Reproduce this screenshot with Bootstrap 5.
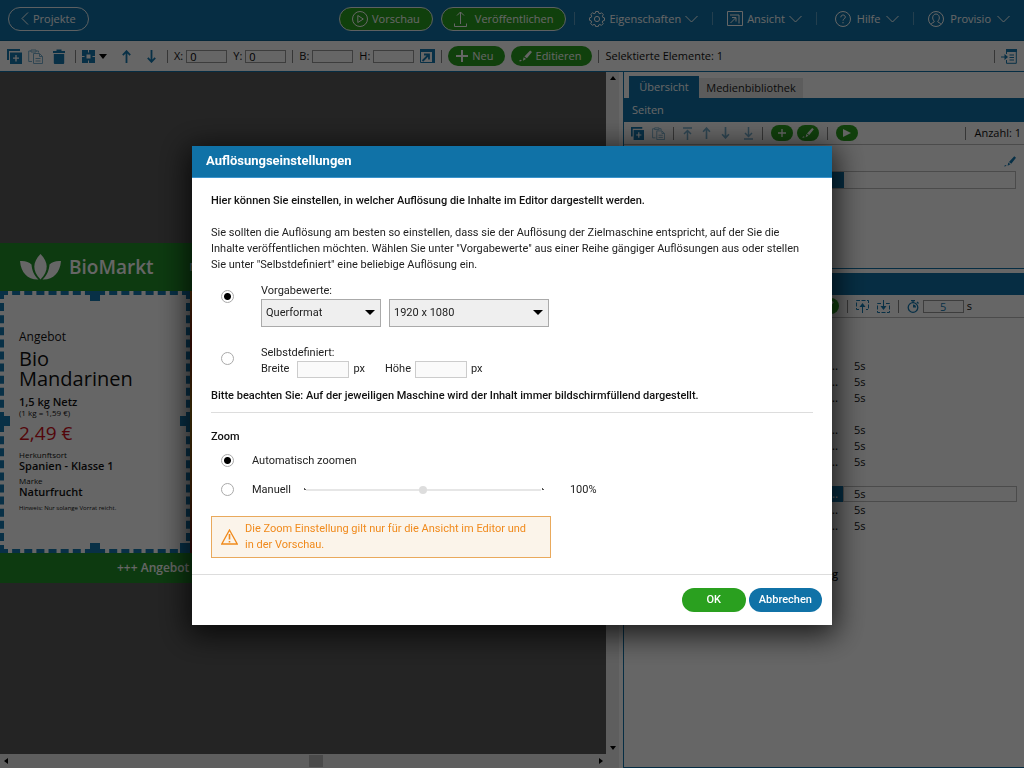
<!DOCTYPE html>
<html lang="de">
<head>
<meta charset="utf-8">
<meta name="viewport" content="width=device-width, initial-scale=1">
<title>Auflösungseinstellungen</title>
<link href="https://cdn.jsdelivr.net/npm/bootstrap@5.3.0/dist/css/bootstrap.min.css" rel="stylesheet">
<style>
:root{--blue:#1072a7;--green:#2aa01f}
body{font:11px/16px "Open Sans",sans-serif;color:#111;background:#fff}
button,input,select{font:inherit}
svg{display:block;flex:none}
.app-shell{height:100vh;overflow:hidden}
.top-bar{height:41px;background:var(--blue);padding:0 14px 3px 8px;border-bottom:1px solid #0b6391}
.top-bar .btn{--bs-btn-padding-y:0;--bs-btn-color:#fff;--bs-btn-hover-color:#fff;--bs-btn-font-size:11px;color:#fff;line-height:16px;white-space:nowrap}
.pill-btn{height:24px;border:1px solid #e8f0f4!important;border-radius:12px!important;display:flex;align-items:center}
.pill-btn.go{background:var(--green)}
.menu-btn{border:0;display:flex;align-items:center;gap:4px;--bs-btn-padding-x:0}
.menu-btn.wide{gap:6px}
.sep{width:1px;height:13px;background:#888;flex:none}
.top-bar .sep{background:#5b9fc2;margin:0 14px}
.top-bar .sep.near{margin-left:8px}
.tool-bar{height:31px;padding:0 7px;border-bottom:1px solid var(--blue);gap:6px}
.icon-btn{border:0;background:none;padding:0;color:#1478b0;display:flex;align-items:center;justify-content:center}
.icon-btn.arrow{width:19px}
.icon-btn.pale{color:#78b0cf}
.field{display:flex;align-items:center;gap:3px;white-space:nowrap}
.field input{width:41px;height:13px;padding:0 3px;border:1px solid #999;background:#fff;line-height:12px;border-radius:0}
.act-btn{height:20px;border:0;border-radius:10px;background:var(--green);color:#fff;display:flex;align-items:center;justify-content:center;gap:4px;padding:0 11px 0 8px}
.work-area{min-width:0;min-height:0}
.canvas-col{min-width:0}
.canvas-bg{background:#5a5a5a;min-height:0;overflow:hidden}
.v-scroll{width:13px;background:#ececec}
.h-scroll{height:14px;background:#ececec}
.brand-band{height:48px;background:#219129;color:#fff;padding-left:20px}
.brand-name{font-size:19px;line-height:24px;font-weight:600}
.brand-nav{margin-left:36px;font-weight:600}
.ticker{height:30px;background:#219129;color:#fff;font-size:12px;font-weight:600;padding-left:117px;white-space:nowrap}
.offer-row{height:262px;background:linear-gradient(#d4761a,#b42a12 20%,#d49a1a 45%,#c06a15 75%,#8a1a1a)}
.offer{position:relative;width:190px;background:#fff;padding:34px 15px 0;
 outline:4px dashed #1478b0;outline-offset:-4px;border:4px solid #fff}
.grip{position:absolute;width:10px;height:10px;background:#1478b0}
.offer .kicker{font-size:12px;font-weight:500}
.offer h2{font-size:20px;line-height:20px;font-weight:500;margin:4px 0 6px}
.offer .line{font-size:11px;line-height:13px;font-weight:600}
.offer .price{font-size:19px;line-height:22px;color:#d01020;font-weight:500;margin:5px 0 6px}
.offer .tiny{font-size:8px;line-height:9px;font-weight:500}
.offer .note{font-size:6px;line-height:8px;margin-top:6px}
.side{width:401px;margin-left:4px;border-left:1px solid var(--blue);border-bottom:1px solid var(--blue);min-height:0}
.side-tabs{height:26px;padding-left:5px}
.side-tabs button{border:0;border-radius:0;padding:0;line-height:16px}
.tab-on{width:70px;height:22px;background:var(--blue);color:#fff}
.tab-off{width:104px;height:20px;background:#e6e6e6;color:#222}
.bar-title{height:24px;background:var(--blue);color:#fff;padding:0 8px;display:flex;align-items:center}
.bar-title.short{height:22px}
.mini-bar{height:23px;border-bottom:1px solid #bbb;padding:0 3px 0 7px}
.mini-go{width:22px;height:16px;border:0;border-radius:8px;background:var(--green);padding:0;display:flex;align-items:center;justify-content:center}
.name-row{height:26px}
.page-list{height:124px;border-bottom:1px solid var(--blue)}
.page-row{height:18px;margin-right:8px;border:1px solid #bbb}
.page-row div{width:219px;background:var(--blue)}
.tree{border-collapse:collapse;width:393px;margin-top:40px}
.tree td{height:16px;padding:0;line-height:14px;border:0}
.tree td:first-child{width:219px;text-align:right;padding-right:5px;font-weight:600}
.tree td:last-child{padding-left:11px}
.tree .picked td:first-child{background:var(--blue);color:#fff}
.tree .picked td:last-child{box-shadow:inset 0 0 0 1px #bbb}
/* dialog */
.modal-backdrop{--bs-backdrop-opacity:.6}
.modal{padding-top:1px;overflow:hidden}
.modal-dialog{max-width:640px}
.modal-content{border:0;border-radius:0;font:11px/16px Roboto,sans-serif;color:#222;box-shadow:0 6px 28px 4px rgba(0,0,0,.75)}
.modal-header{height:32px;background:#1072a7;border-bottom:1px solid #3c94cc;border-radius:0;padding:0 14px}
.modal-title{font-size:13px;line-height:16px;font-weight:700;color:#fff}
.modal-body{padding:15px 19px 16px}
.modal-body p{margin:0}
.strong-line{font-weight:500;color:#111}
.gap-s{margin-top:10px!important}
.gap-m{margin-top:13px}
.gap-l{margin-top:18px}
.opt{display:grid;grid-template-columns:50px 1fr}
.opt.slim{grid-template-columns:41px 1fr}
.dot{appearance:none;width:13px;height:13px;border:1px solid #aaa;border-radius:50%;margin:7px 0 0 10px;background:#fff}
.slim .dot{margin-top:0}
.dot:checked{background:radial-gradient(circle,#000 3px,#fff 4px)}
.pick{height:28px;border:1px solid #aaa;border-radius:0;background:#efefef url("data:image/svg+xml,%3Csvg xmlns='http://www.w3.org/2000/svg' width='10' height='5'%3E%3Cpath d='M0 0h10L5 5z'/%3E%3C/svg%3E") no-repeat right 5px center;appearance:none;padding:0 4px;color:#222}
.pick.narrow{width:120px}
.pick.broad{width:160px}
.size-box{width:52px;height:17px;border:1px solid #ccc;background:#fafafa;padding:0 3px}
.rule{height:1px;background:#ddd}
.zoom-range{appearance:none;width:241px;height:9px;margin:0 26px 0 12px;background:
 radial-gradient(circle,#555 1px,transparent 1px) left center/3px 3px no-repeat,
 radial-gradient(circle,#555 1px,transparent 1px) right center/3px 3px no-repeat,
 linear-gradient(#e6e6e6,#e6e6e6) center/235px 2px no-repeat}
.zoom-range::-webkit-slider-thumb{appearance:none;width:8px;height:8px;border-radius:50%;background:#ddd}
.hint{width:340px;border:1px solid #e9a95c;background:#fbf4ea;color:#f08a1c;padding:4px 16px 4px 9px;gap:7px}
.modal-footer{padding:13px 10px;border-top:1px solid #ddd;gap:3px}
.modal-footer .btn{margin:0;height:24px;border:0;border-radius:12px;padding:0 10px;font-size:11px;line-height:24px;font-weight:500;color:#fff}
.modal-footer .ok{background:#2aa01f;min-width:64px}
.modal-footer .cancel{background:#1072a7}
</style>
</head>
<body>
<svg width="0" height="0" class="position-absolute" aria-hidden="true">
 <symbol id="chev" viewBox="0 0 13 8"><path d="M.5 1l6 6 6-6" fill="none" stroke="currentColor"/></symbol>
 <symbol id="dup" viewBox="0 0 15 15"><path d="M1 11V1h12" fill="none" stroke="currentColor" stroke-width="2"/><path d="M3 3.500h12V15H3z" fill="currentColor"/><path d="M9 6v6.500M6 9.200h6" stroke="#fff" stroke-width="1.300"/></symbol>
 <symbol id="paste" viewBox="0 0 15 15"><path d="M4 12.500H.7V2H3M8 2h2.500v1.500M3 1h5v2H3z" fill="none" stroke="currentColor"/><path d="M5.500 4.500h6l3 3v7h-9zM11.500 4.500v3h3M7.500 9.500h5M7.500 12h5" fill="none" stroke="currentColor"/></symbol>
 <symbol id="up" viewBox="0 0 9 13"><path d="M4.500 13V1.500M.8 5.200l3.700-4 3.700 4" fill="none" stroke="currentColor" stroke-width="1.800"/></symbol>
 <symbol id="down" viewBox="0 0 9 13"><path d="M4.500 0v11.500M.8 7.800l3.700 4 3.700-4" fill="none" stroke="currentColor" stroke-width="1.800"/></symbol>
 <symbol id="pen" viewBox="0 0 14 12"><path d="M12 0l2 1.600-5.500 6.900-2.700-2zM5 7.300l2.600 2-3.400 1.700zM0 11.200l2-1.200 1 1-2 .8z" fill="currentColor"/></symbol>
 <symbol id="plus" viewBox="0 0 12 12"><path d="M6 0v12M0 6h12" stroke="currentColor" stroke-width="2"/></symbol>
</svg>

<div class="app-shell d-flex flex-column">
 <header class="top-bar d-flex align-items-center">
  <button class="btn pill-btn px-2" type="button"><svg class="ms-1" width="8" height="13" viewBox="0 0 8 13"><path d="M7 .5l-6 6 6 6" fill="none" stroke="#fff"/></svg><span class="ms-1 me-1">Projekte</span></button>
  <button class="btn pill-btn go ms-auto px-2" type="button"><svg class="ms-1 me-1" width="16" height="16" viewBox="0 0 16 16" fill="none" stroke="#fff"><circle cx="8" cy="8" r="7.500"/><path d="M5.800 4.500v7l5.500-3.500z"/></svg><span class="me-1">Vorschau</span></button>
  <button class="btn pill-btn go ms-2 px-2" type="button"><svg class="ms-1 me-2" width="13" height="16" viewBox="0 0 13 16" fill="none" stroke="#fff"><path d="M6.500 13V1M3 4.500L6.500 1 10 4.500M.5 12.500v3h12v-3"/></svg><span class="me-1">Veröffentlichen</span></button>
  <span class="sep near"></span>
  <button class="btn menu-btn" type="button"><svg width="16" height="16" viewBox="0 0 16 16" fill="none" stroke="#fff"><path d="M6.700 .5h2.600l.5 1.700 1.200.5 1.600-.9 1.700 1.800-.9 1.600.5 1.200 1.600.5v2.500l-1.700.5-.5 1.200.9 1.500-1.800 1.800-1.500-.9-1.200.5-.5 1.600H6.700l-.5-1.700-1.200-.5-1.600.9-1.700-1.800.9-1.500-.5-1.200-1.600-.5V6.800l1.700-.5.500-1.200-.9-1.600 1.800-1.700 1.500.9 1.200-.5z"/><circle cx="8" cy="8" r="2.600"/></svg>Eigenschaften<svg width="13" height="8"><use href="#chev"/></svg></button>
  <span class="sep"></span>
  <button class="btn menu-btn" type="button"><svg width="16" height="15" viewBox="0 0 16 15" fill="none" stroke="#fff"><path d="M.5 .5h15v14H.5zM3 4h9v8.500M3.500 12l5-5M5 6.500h4v4"/></svg>Ansicht<svg width="13" height="8"><use href="#chev"/></svg></button>
  <span class="sep"></span>
  <button class="btn menu-btn wide ms-1" type="button"><svg width="16" height="16" viewBox="0 0 16 16" fill="none" stroke="#fff"><circle cx="8" cy="8" r="7.500"/><path d="M5.800 6.300c0-3 4.500-3 4.500-.2C10.300 8 8 7.700 8 9.700M8 11v1.300"/></svg>Hilfe<svg width="13" height="8"><use href="#chev"/></svg></button>
  <span class="sep"></span>
  <button class="btn menu-btn wide" type="button"><svg width="16" height="16" viewBox="0 0 16 16" fill="none" stroke="#fff"><circle cx="8" cy="8" r="7.500"/><path d="M3 13.500c.3-2 3.500-1.700 3.300-3.300C3.500 8 4.500 3 8 3s4.500 5 1.700 7.200c-.2 1.600 3 1.300 3.300 3.300"/></svg>Provisio<svg width="13" height="8"><use href="#chev"/></svg></button>
 </header>

 <div class="tool-bar d-flex align-items-center">
  <button class="icon-btn" type="button" aria-label="Duplizieren"><svg width="15" height="15"><use href="#dup"/></svg></button>
  <button class="icon-btn pale" type="button" aria-label="Einfügen"><svg width="15" height="15"><use href="#paste"/></svg></button>
  <button class="icon-btn px-1" type="button" aria-label="Löschen"><svg width="12" height="15" viewBox="0 0 12 15" fill="currentColor"><path d="M0 2h3.500V.5h5V2H12v2H0zM.8 5h10.400v9q0 1-1 1H1.800q-1 0-1-1z"/></svg></button>
  <span class="sep"></span>
  <button class="icon-btn" type="button" aria-label="Ausrichten"><svg width="13" height="13" viewBox="0 0 13 13"><path d="M0 0h13v13H0z" fill="currentColor"/><path d="M4.500 4.500h4v4h-4zM6 0h1v2.500H6zM6 10.500h1V13H6zM0 6h2.500v1H0zM10.500 6H13v1h-2.500z" fill="#fff"/></svg><svg class="ms-1" width="8" height="5"><path d="M0 0h8L4 5z"/></svg></button>
  <button class="icon-btn arrow ms-1" type="button" aria-label="Nach oben"><svg width="9" height="13"><use href="#up"/></svg></button>
  <button class="icon-btn arrow" type="button" aria-label="Nach unten"><svg width="9" height="13"><use href="#down"/></svg></button>
  <span class="sep"></span>
  <label class="field">X: <input value="0"></label>
  <label class="field">Y: <input value="0"></label>
  <span class="sep"></span>
  <label class="field">B: <input></label>
  <label class="field">H: <input></label>
  <button class="icon-btn" type="button" aria-label="Größe anpassen"><svg width="15" height="14" viewBox="0 0 15 14" fill="none" stroke="currentColor"><path d="M0 1.500h15M13.500 0v14" stroke-width="3"/><path d="M.5 2v11.500H13"/><path d="M2.500 12l6-6M4 5.500h5v5" stroke-width="1.800"/></svg></button>
  <span class="sep"></span>
  <button class="act-btn" type="button"><svg width="12" height="12"><use href="#plus"/></svg>Neu</button>
  <button class="act-btn" type="button"><svg width="13" height="12"><use href="#pen"/></svg>Editieren</button>
  <span class="sep"></span>
  <span class="text-nowrap">Selektierte Elemente: 1</span>
  <span class="sep ms-auto"></span>
  <button class="icon-btn" type="button" aria-label="Seitenleiste einklappen"><svg width="16" height="15" viewBox="0 0 16 15" fill="none" stroke="currentColor"><path d="M5.500 5V1.500h9.800v12.800H5.500V11"/><path d="M5 1.500h11" stroke-width="3"/><path d="M8.500 6h4.500M8.500 8.500h4.500M8.500 11h4.500M0 8h5"/><path d="M3.500 5L7 8l-3.500 3z" fill="currentColor" stroke="none"/></svg></button>
 </div>

 <div class="work-area d-flex flex-fill">
  <div class="canvas-col d-flex flex-column flex-fill">
   <div class="d-flex flex-fill work-area">
    <main class="canvas-bg flex-fill d-flex flex-column justify-content-center">
     <div class="brand-band d-flex align-items-center">
      <svg width="41" height="26" viewBox="0 0 41 26" fill="#fff"><path d="M20.500 0c8 8 8.500 17 0 25.500C12 17 12.500 8 20.500 0z"/><path d="M0 7c5-.5 9 1 11.500 3.500.5 6 2.500 11 7 15C8 26 1 19 0 7zM41 7c-5-.5-9 1-11.500 3.500-.5 6-2.500 11-7 15C33 26 40 19 41 7z"/></svg>
      <span class="brand-name ms-2">BioMarkt</span><span class="brand-nav">Neu</span>
     </div>
     <div class="offer-row d-flex">
      <section class="offer">
       <i class="grip" style="left:86px;top:-4px"></i><i class="grip" style="left:-4px;top:121px"></i><i class="grip" style="right:-4px;top:121px"></i><i class="grip" style="left:86px;bottom:-4px"></i><i class="grip" style="right:-4px;bottom:-4px"></i>
       <div class="kicker">Angebot</div>
       <h2>Bio<br>Mandarinen</h2>
       <div class="line">1,5 kg Netz</div>
       <div class="tiny">(1 kg = 1,59 €)</div>
       <div class="price">2,49 €</div>
       <div class="tiny">Herkunftsort</div>
       <div class="line mb-1">Spanien - Klasse 1</div>
       <div class="tiny">Marke</div>
       <div class="line">Naturfrucht</div>
       <div class="note">Hinweis: Nur solange Vorrat reicht.</div>
      </section>
     </div>
     <div class="ticker d-flex align-items-center">+++ Angebot +++</div>
    </main>
    <div class="v-scroll d-flex flex-column justify-content-between align-items-center py-1"><svg width="6" height="4"><path d="M0 4l3-4 3 4z"/></svg><svg width="6" height="4"><path d="M0 0l3 4 3-4z"/></svg></div>
   </div>
   <div class="h-scroll d-flex align-items-center justify-content-between ps-1">
    <svg width="4" height="6"><path d="M4 0L0 3l4 3z"/></svg>
    <svg class="ms-4" width="14" height="12"><path d="M0 0h14v12H0z" fill="#b8b8b8"/></svg>
    <svg class="me-3" width="4" height="6"><path d="M0 0l4 3-4 3z"/></svg>
   </div>
  </div>

  <aside class="side flex-shrink-0">
   <div class="side-tabs d-flex align-items-end"><button class="tab-on" type="button">Übersicht</button><button class="tab-off" type="button">Medienbibliothek</button></div>
   <div class="bar-title">Seiten</div>
   <div class="mini-bar d-flex align-items-center">
    <button class="icon-btn" type="button" aria-label="Seite duplizieren"><svg width="13" height="13"><use href="#dup"/></svg></button>
    <button class="icon-btn pale ms-2" type="button" aria-label="Seite einfügen"><svg width="13" height="13"><use href="#paste"/></svg></button>
    <span class="sep ms-2"></span>
    <button class="icon-btn pale ms-2" type="button" aria-label="An den Anfang"><svg width="11" height="13" viewBox="0 0 11 13"><path d="M1 1h9M5.500 13V3.500M2 7l3.500-3.500L9 7" fill="none" stroke="currentColor" stroke-width="1.500"/></svg></button>
    <button class="icon-btn pale arrow ms-1" type="button" aria-label="Seite nach oben"><svg width="9" height="12"><use href="#up"/></svg></button>
    <button class="icon-btn pale arrow" type="button" aria-label="Seite nach unten"><svg width="9" height="12"><use href="#down"/></svg></button>
    <button class="icon-btn pale arrow ms-1" type="button" aria-label="Ans Ende"><svg width="11" height="13" viewBox="0 0 11 13"><path d="M1 12h9M5.500 0v9.500M2 6l3.500 3.500L9 6" fill="none" stroke="currentColor" stroke-width="1.500"/></svg></button>
    <span class="sep ms-1"></span>
    <button class="mini-go text-white ms-2" type="button" aria-label="Neue Seite"><svg width="8" height="8"><use href="#plus"/></svg></button>
    <button class="mini-go text-white ms-1" type="button" aria-label="Seite bearbeiten"><svg width="12" height="10"><use href="#pen"/></svg></button>
    <span class="sep ms-2"></span>
    <button class="mini-go ms-2" type="button" aria-label="Abspielen"><svg width="8" height="8"><path d="M0 0l8 4-8 4z" fill="#fff"/></svg></button>
    <span class="sep ms-auto me-2"></span><span>Anzahl: 1</span>
   </div>
   <div class="page-list d-flex flex-column">
    <div class="name-row d-flex justify-content-end align-items-end pb-1 pe-2"><button class="icon-btn" type="button" aria-label="Name bearbeiten"><svg width="12" height="11"><use href="#pen"/></svg></button></div>
    <div class="page-row d-flex"><div></div></div>
   </div>
   <div class="bar-title short mt-1"></div>
   <div class="mini-bar d-flex align-items-center justify-content-end pe-5">
    <button class="mini-go text-white" type="button" aria-label="Medium bearbeiten"><svg width="12" height="10"><use href="#pen"/></svg></button>
    <span class="sep ms-2 me-2"></span>
    <button class="icon-btn" type="button" aria-label="Exportieren"><svg width="13" height="13" viewBox="0 0 13 13" fill="none" stroke="currentColor"><path d="M3 9.500H.5v-9h12v9H10" stroke-dasharray="4 1.500"/><path d="M6.500 13V5"/><path d="M3.500 7l3-4 3 4z" fill="currentColor" stroke="none"/></svg></button>
    <button class="icon-btn ms-2" type="button" aria-label="Importieren"><svg width="13" height="13" viewBox="0 0 13 13" fill="none" stroke="currentColor"><path d="M4 3.500H.5v9h12v-9H9" stroke-dasharray="4 1.500"/><path d="M6.500 0v8"/><path d="M3.500 6l3 4 3-4z" fill="currentColor" stroke="none"/></svg></button>
    <span class="sep ms-2 me-2"></span>
    <svg width="12" height="13" viewBox="0 0 12 13" fill="none" stroke="#1478b0" stroke-width="1.300"><circle cx="6" cy="7.500" r="4.800"/><path d="M4 .7h4M6 1v2M10 2l1.500 1.500"/><path d="M6 4.500v3h3A3 3 0 0 0 6 4.500z" fill="#1478b0" stroke="none"/></svg>
    <label class="field ms-1 me-1"><input class="text-center" style="color:#1478b0" value="5">s</label>
   </div>
   <table class="tree">
    <tr><td>...</td><td>5s</td></tr><tr><td>...</td><td>5s</td></tr><tr><td>...</td><td>5s</td></tr>
    <tr><td></td><td></td></tr>
    <tr><td>...</td><td>5s</td></tr><tr><td>...</td><td>5s</td></tr><tr><td>...</td><td>5s</td></tr>
    <tr><td></td><td></td></tr>
    <tr class="picked"><td>...</td><td>5s</td></tr><tr><td>...</td><td>5s</td></tr><tr><td>...</td><td>5s</td></tr>
    <tr><td></td><td></td></tr><tr><td></td><td></td></tr>
    <tr><td>g</td><td></td></tr>
   </table>
  </aside>
 </div>
</div>

<div class="modal-backdrop show"></div>
<div class="modal d-block" role="dialog" aria-modal="true" aria-labelledby="dlgTitle">
 <div class="modal-dialog modal-dialog-centered my-0 min-vh-100">
  <form class="modal-content">
   <div class="modal-header"><h1 class="modal-title" id="dlgTitle">Auflösungseinstellungen</h1></div>
   <div class="modal-body">
    <p class="strong-line mb-3">Hier können Sie einstellen, in welcher Auflösung die Inhalte im Editor dargestellt werden.</p>
    <p class="pe-2">Sie sollten die Auflösung am besten so einstellen, dass sie der Auflösung der Zielmaschine entspricht, auf der Sie die Inhalte veröffentlichen möchten. Wählen Sie unter "Vorgabewerte" aus einer Reihe gängiger Auflösungen aus oder stellen Sie unter "Selbstdefiniert" eine beliebige Auflösung ein.</p>
    <div class="opt gap-s">
     <input class="dot" type="radio" name="res" id="preset" checked>
     <div><label class="d-block" for="preset">Vorgabewerte:</label>
      <div class="d-flex gap-2"><select class="pick narrow" aria-label="Format"><option>Querformat</option></select><select class="pick broad" aria-label="Auflösung"><option>1920 x 1080</option></select></div></div>
    </div>
    <div class="opt gap-l">
     <input class="dot" type="radio" name="res" id="custom">
     <div><label class="d-block" for="custom">Selbstdefiniert:</label>
      <div class="d-flex align-items-center"><label for="bw">Breite</label><input class="size-box ms-2 me-1" id="bw"><span>px</span><label class="ms-3 ps-1" for="bh">Höhe</label><input class="size-box ms-1 me-1" id="bh"><span>px</span></div></div>
    </div>
    <p class="strong-line gap-s">Bitte beachten Sie: Auf der jeweiligen Maschine wird der Inhalt immer bildschirmfüllend dargestellt.</p>
    <div class="rule mt-2"></div>
    <p class="strong-line mt-3">Zoom</p>
    <div class="opt slim align-items-center mt-2"><input class="dot" type="radio" name="zoom" id="auto" checked><label for="auto">Automatisch zoomen</label></div>
    <div class="opt slim align-items-center gap-m"><input class="dot" type="radio" name="zoom" id="man"><div class="d-flex align-items-center"><label for="man">Manuell</label><input class="zoom-range" type="range" min="0" max="200" value="100" aria-label="Zoom"><span>100%</span></div></div>
    <div class="hint gap-l d-flex align-items-center"><svg width="17" height="16" viewBox="0 0 17 16" fill="none" stroke="#f08a1c" stroke-width="1.300"><path d="M8.500 1l7.700 14H.8z"/><path d="M8.500 5v5.500M8.500 12v1.500" stroke-width="1.600"/></svg><span>Die Zoom Einstellung gilt nur für die Ansicht im Editor und in der Vorschau.</span></div>
   </div>
   <div class="modal-footer"><button class="btn ok" type="button">OK</button><button class="btn cancel" type="button">Abbrechen</button></div>
  </form>
 </div>
</div>
<script src="https://cdn.jsdelivr.net/npm/bootstrap@5.3.0/dist/js/bootstrap.bundle.min.js"></script>
</body>
</html>
